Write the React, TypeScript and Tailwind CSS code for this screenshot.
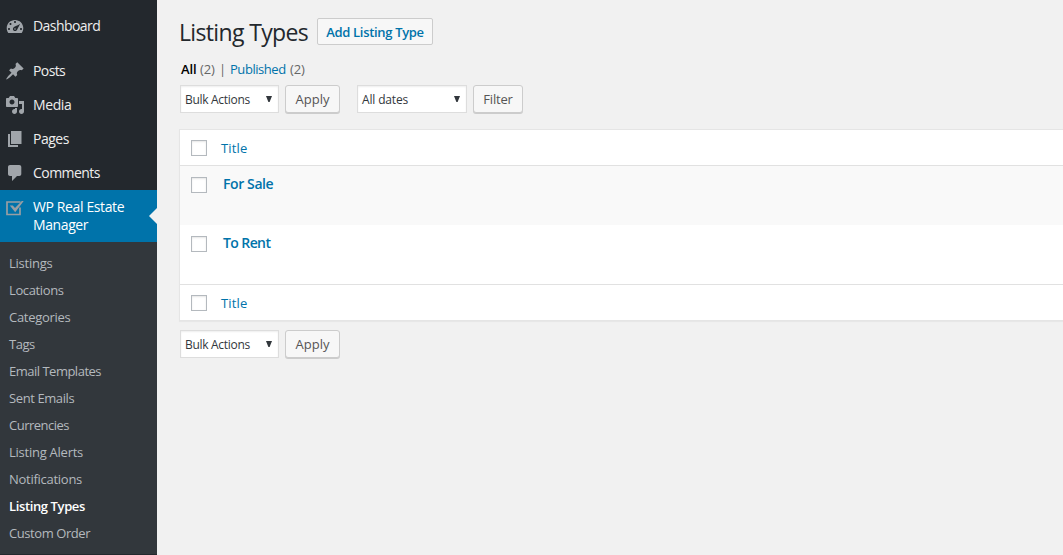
import type { ReactNode } from "react";

function Dashicon({ d }: { d: string }) {
  return (
    <svg viewBox="0 0 20 20" className="h-5 w-5 shrink-0" fill="#a0a5aa" fillRule="evenodd">
      <path d={d} />
    </svg>
  );
}

const icons = {
  dashboard:
    "M3.3 17h13.4C17.6 15.63 18.3 13.9 18.3 12c0-4.41-3.7-8-8.3-8s-8.3 3.59-8.3 8c0 1.9.7 3.63 1.6 5zM9 6c0-.55.45-1 1-1s1 .45 1 1c0 .56-.45 1-1 1s-1-.44-1-1zM4.5 8c0-.55.45-1 1-1s1 .45 1 1c0 .56-.45 1-1 1s-1-.44-1-1zM8.52 11.4c.84-.83 6.51-3.5 6.51-3.5s-2.66 5.68-3.49 6.51c-.84.84-2.18.84-3.02 0-.83-.83-.83-2.18 0-3.01zM3 13c0-.55.45-1 1-1s1 .45 1 1c0 .56-.45 1-1 1s-1-.44-1-1zM9.2 13c0 .45.35.8.8.8s.8-.35.8-.8-.35-.8-.8-.8-.8.35-.8.8zM15 13c0-.55.45-1 1-1s1 .45 1 1c0 .56-.45 1-1 1s-1-.44-1-1z",
  posts:
    "M10.44 3.02l1.82-1.82 6.36 6.35-1.83 1.82c-1.05-.68-2.48-.57-3.41.36l-.75.75c-.92.93-1.04 2.35-.35 3.41l-1.83 1.82-2.41-2.41-2.8 2.79c-.42.42-3.38 2.71-3.8 2.29s1.86-3.39 2.28-3.81l2.79-2.79L4.1 9.36l1.83-1.82c1.05.69 2.48.57 3.4-.36l.75-.75c.93-.92 1.05-2.35.36-3.41z",
  media:
    "M13 11V4c0-.55-.45-1-1-1h-1.67L9 1H5L3.67 3H2c-.55 0-1 .45-1 1v7c0 .55.45 1 1 1h10c.55 0 1-.45 1-1zM7 4.5c1.38 0 2.5 1.12 2.5 2.5S8.38 9.5 7 9.5 4.5 8.38 4.5 7 5.62 4.5 7 4.5zM14 6h5v10.5c0 1.38-1.12 2.5-2.5 2.5S14 17.88 14 16.5s1.12-2.5 2.5-2.5c.17 0 .34.02.5.05V9h-3V6zM10 14.05V13h2v3.5c0 1.38-1.12 2.5-2.5 2.5S7 17.88 7 16.5 8.12 14 9.5 14c.17 0 .34.02.5.05z",
  pages: "M6 15V2h10.5v13H6zM5 16h8v2H3V5h2v11z",
  comments:
    "M5 2h9.3c1.1 0 2 .9 2 2v7c0 1.1-.9 2-2 2H12l-5 5v-5H5c-1.1 0-2-.9-2-2V4c0-1.1.9-2 2-2z",
};

function MenuRow({ icon, label, className }: { icon: string; label: string; className: string }) {
  return (
    <li className="flex h-[34px] items-center pl-[5px] text-sm text-[#eee]">
      <Dashicon d={icon} />
      <span className={`ml-2 ${className}`}>{label}</span>
    </li>
  );
}

const submenu = [
  { label: "Listings", cls: "tracking-[-0.25px]" },
  { label: "Locations", cls: "tracking-[-0.38px]" },
  { label: "Categories", cls: "tracking-[-0.28px]" },
  { label: "Tags", cls: "tracking-[-0.5px]" },
  { label: "Email Templates", cls: "tracking-[-0.5px]" },
  { label: "Sent Emails", cls: "tracking-[-0.4px]" },
  { label: "Currencies", cls: "tracking-[-0.5px]" },
  { label: "Listing Alerts", cls: "tracking-[-0.25px]" },
  { label: "Notifications", cls: "tracking-[-0.27px]" },
  { label: "Listing Types", cls: "tracking-[-0.38px] font-semibold text-white" },
  { label: "Custom Order", cls: "tracking-[-0.43px]" },
];

function Sidebar() {
  return (
    <nav className="flex w-[157px] shrink-0 flex-col bg-[#23282d] pt-[9px]">
      <ul>
        <MenuRow icon={icons.dashboard} label="Dashboard" className="tracking-[-0.56px]" />
        <li className="h-[11px]" />
        <MenuRow icon={icons.posts} label="Posts" className="tracking-[-0.6px]" />
        <MenuRow icon={icons.media} label="Media" className="tracking-[-0.4px]" />
        <MenuRow icon={icons.pages} label="Pages" className="tracking-[-0.5px]" />
        <MenuRow icon={icons.comments} label="Comments" className="tracking-[-0.55px]" />
      </ul>
      <div className="relative flex h-[52px] bg-[#0073aa] pt-2 pl-[5px] text-sm leading-[18px] text-white">
        <svg viewBox="0 0 20 20" className="h-5 w-5 shrink-0" fill="none" stroke="#999ea3">
          <path d="M15.500 4H2v12.500h13V9.500" strokeWidth="1.700" />
          <path d="M4.800 7.500h3l2.200 2.600L16.800 3h1.900l-8.500 11.200z" fill="#999ea3" stroke="none" />
        </svg>
        <span className="ml-2">
          <span className="block tracking-[-0.38px]">WP Real Estate</span>
          <span className="block tracking-[-0.4px]">Manager</span>
        </span>
        <span className="absolute top-[18px] right-0 border-y-8 border-r-8 border-y-transparent border-r-[#f1f1f1]" />
      </div>
      <ul className="h-[312px] bg-[#32373c] pt-2 pl-[9px] text-[13px] text-[#b4b9be]">
        {submenu.map((s) => (
          <li key={s.label} className={`h-[27px] leading-[27px] ${s.cls}`}>
            {s.label}
          </li>
        ))}
      </ul>
    </nav>
  );
}

function Select({ label, className, textClass }: { label: string; className: string; textClass: string }) {
  return (
    <div className={`flex h-7 items-center justify-between border border-[#ddd] bg-white pr-[6px] pl-1 text-xs text-[#32373c] shadow-[inset_0_1px_2px_rgba(0,0,0,0.07)] ${className}`}>
      <span className={`pt-[2px] ${textClass}`}>{label}</span>
      <svg viewBox="0 0 6 6" className="mb-px h-[6px] w-[6px]" fill="#32373c">
        <path d="M0 0h6L3.600 6H2.400z" />
      </svg>
    </div>
  );
}

function Button({ children, className }: { children: ReactNode; className: string }) {
  return (
    <button className={`h-7 rounded-[3px] border border-[#ccc] bg-[#f7f7f7] text-center text-[13px] leading-[26px] text-[#555] shadow-[0_1px_0_#ccc] ${className}`}>
      {children}
    </button>
  );
}

function Checkbox() {
  return <span className="block h-4 w-4 shrink-0 border border-[#b4b9be] bg-white shadow-[inset_0_1px_2px_rgba(0,0,0,0.1)]" />;
}

function TitleRow({ className }: { className: string }) {
  return (
    <div className={`flex h-9 items-center border-[#e1e1e1] pl-[11px] text-[13px] text-[#0073aa] ${className}`}>
      <Checkbox />
      <span className="ml-[14px] pt-[2px] tracking-[0.15px]">Title</span>
    </div>
  );
}

function ListingRow({ label, className }: { label: string; className: string }) {
  return (
    <div className={`flex h-[59px] pt-[11px] pl-[11px] text-sm leading-[18px] font-semibold text-[#0073aa] ${className}`}>
      <Checkbox />
      <span className="-mt-[2px] ml-4">{label}</span>
    </div>
  );
}

export default function App() {
  return (
    <div className="flex h-[555px] w-[1063px] overflow-hidden bg-[#f1f1f1] font-['Open_Sans',sans-serif]">
      <Sidebar />
      <main className="flex min-w-0 flex-1 flex-col pl-[22px]">
        <div className="flex h-[46px] items-start pt-[18px]">
          <h1 className="w-[138px] text-[23px] leading-[28px] tracking-[-0.65px] whitespace-nowrap text-[#23282d]">Listing Types</h1>
          <a className="h-[27px] w-[116px] rounded-[2px] border border-[#ccc] bg-[#f7f7f7] text-center text-[13px] leading-[27px] font-semibold tracking-[-0.32px] whitespace-nowrap text-[#0073aa]">
            Add Listing Type
          </a>
        </div>
        <div className="mt-[14px] flex h-[18px] pl-[2px] text-[13px] leading-[18px] text-[#666]">
          <span className="w-[19px] font-semibold tracking-[-0.1px] text-black">All</span>
          <span className="w-[19px] tracking-[-0.1px]">(2)</span>
          <span className="w-[11px]">|</span>
          <span className="w-[60px] tracking-[-0.45px] text-[#0073aa]">Published</span>
          <span className="tracking-[-0.1px]">(2)</span>
        </div>
        <div className="mt-[7px] flex pl-px">
          <Select label="Bulk Actions" className="w-[99px]" textClass="tracking-[-0.3px]" />
          <Button className="ml-[6px] w-[55px]">Apply</Button>
          <Select label="All dates" className="ml-[17px] w-[110px]" textClass="tracking-[-0.15px]" />
          <Button className="ml-[6px] w-[50px] tracking-[-0.2px]">Filter</Button>
        </div>
        <section className="mt-4 h-[192px] border-y border-l border-[#e5e5e5] bg-white shadow-[0_1px_1px_rgba(0,0,0,0.04)]">
          <TitleRow className="border-b" />
          <ListingRow label="For Sale" className="bg-[#f9f9f9] tracking-[-0.4px]" />
          <ListingRow label="To Rent" className="tracking-[-0.6px]" />
          <TitleRow className="border-t" />
        </section>
        <div className="mt-[9px] flex pl-px">
          <Select label="Bulk Actions" className="w-[99px]" textClass="tracking-[-0.3px]" />
          <Button className="ml-[6px] w-[55px]">Apply</Button>
        </div>
      </main>
    </div>
  );
}
